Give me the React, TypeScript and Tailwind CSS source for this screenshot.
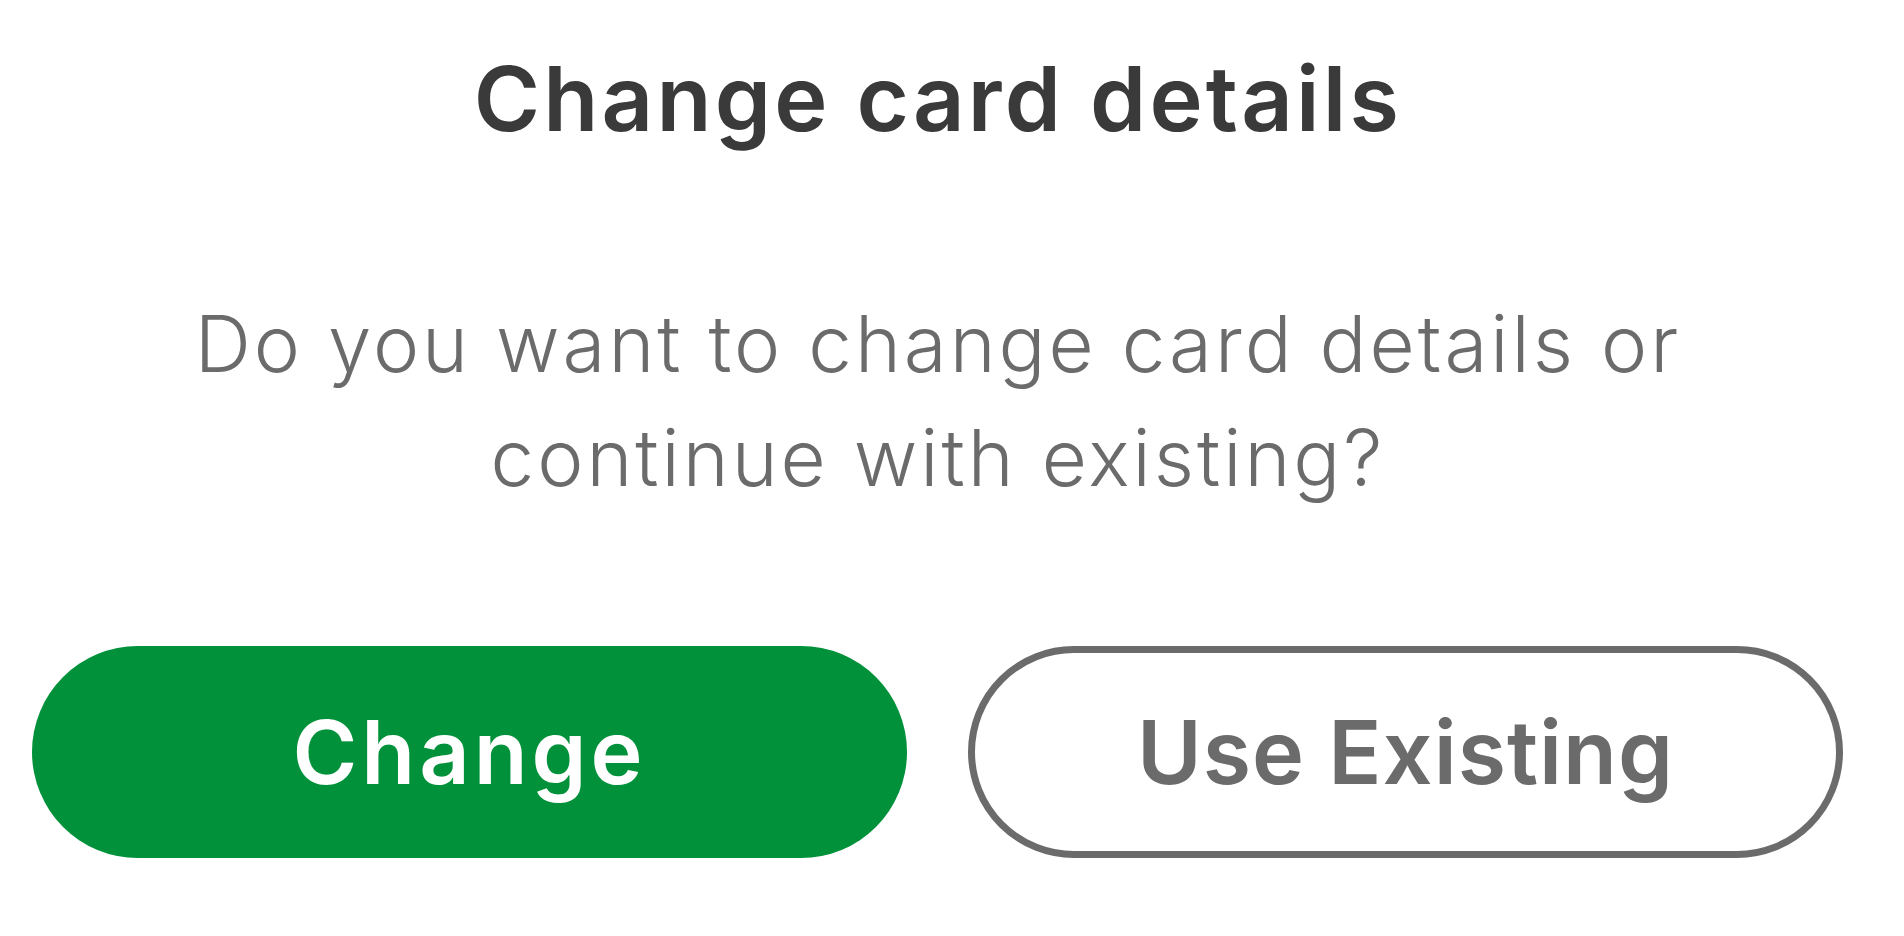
import React from "react";

export default function App() {
  return (
    <div className="w-full h-[936px] bg-white overflow-hidden" style={{ fontFamily: "Inter, 'Open Sans', sans-serif" }}>
      <div className="w-[1876px]">
        <div className="pt-[54px] flex flex-col items-center">
          <h1 className="text-[90px] leading-[90px] font-semibold text-[#3a3a3a] tracking-[3.2px]">Change card details</h1>
          <p className="mt-[143px] text-center text-[78px] leading-[114px] font-light text-[#6b6b6b] tracking-[3px]">
            Do you want to change card details or
            <br />
            continue with existing?
          </p>
        </div>
        <div className="mt-[131px] px-[32px] flex gap-[61px]">
          <button className="w-[875px] h-[212px] rounded-full bg-[#00913a] text-white text-[88px] leading-none font-semibold tracking-[4px] flex items-center justify-center">
            Change
          </button>
          <button className="w-[875px] h-[212px] rounded-full border-[7px] border-[#6b6b6b] bg-white text-[#6b6b6b] text-[88px] leading-none font-semibold tracking-[1px] flex items-center justify-center">
            Use Existing
          </button>
        </div>
      </div>
    </div>
  );
}
